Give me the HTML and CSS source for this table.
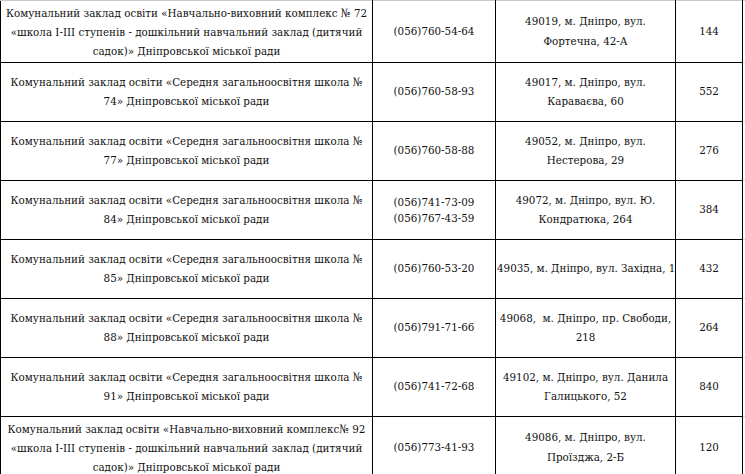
FILE: index.html
```html
<!DOCTYPE html>
<html lang="uk">
<head>
<meta charset="utf-8">
<title>Заклади освіти</title>
<link rel="stylesheet" href="styles.css">
</head>
<body>
<table class="schools">
  <colgroup>
    <col class="c-name"><col class="c-phone"><col class="c-addr"><col class="c-num"><col class="c-ghost">
  </colgroup>
  <tbody>
    <tr class="first">
      <td class="name tight">Комунальний заклад освіти «Навчально-виховний комплекс № 72<br>«школа І-ІІІ ступенів - дошкільний навчальний заклад (дитячий<br>садок)» Дніпровської міської ради</td>
      <td>(056)760-54-64</td>
      <td>49019, м. Дніпро, вул.<br>Фортечна, 42-А</td>
      <td>144</td>
      <td class="ghost"></td>
    </tr>
    <tr>
      <td class="name">Комунальний заклад освіти «Середня загальноосвітня школа №<br>74» Дніпровської міської ради</td>
      <td>(056)760-58-93</td>
      <td>49017, м. Дніпро, вул.<br>Караваєва, 60</td>
      <td>552</td>
      <td class="ghost"></td>
    </tr>
    <tr>
      <td class="name">Комунальний заклад освіти «Середня загальноосвітня школа №<br>77» Дніпровської міської ради</td>
      <td>(056)760-58-88</td>
      <td>49052, м. Дніпро, вул.<br>Нестерова, 29</td>
      <td>276</td>
      <td class="ghost"></td>
    </tr>
    <tr>
      <td class="name">Комунальний заклад освіти «Середня загальноосвітня школа №<br>84» Дніпровської міської ради</td>
      <td class="phones">(056)741-73-09<br>(056)767-43-59</td>
      <td>49072, м. Дніпро, вул. Ю.<br>Кондратюка, 264</td>
      <td>384</td>
      <td class="ghost"></td>
    </tr>
    <tr>
      <td class="name">Комунальний заклад освіти «Середня загальноосвітня школа №<br>85» Дніпровської міської ради</td>
      <td>(056)760-53-20</td>
      <td>49035, м. Дніпро, вул. Західна, 1</td>
      <td>432</td>
      <td class="ghost"></td>
    </tr>
    <tr>
      <td class="name">Комунальний заклад освіти «Середня загальноосвітня школа №<br>88» Дніпровської міської ради</td>
      <td>(056)791-71-66</td>
      <td>49068,&nbsp; м. Дніпро, пр. Свободи,<br>218</td>
      <td>264</td>
      <td class="ghost"></td>
    </tr>
    <tr>
      <td class="name">Комунальний заклад освіти «Середня загальноосвітня школа №<br>91» Дніпровської міської ради</td>
      <td>(056)741-72-68</td>
      <td>49102, м. Дніпро, вул. Данила<br>Галицького, 52</td>
      <td>840</td>
      <td class="ghost"></td>
    </tr>
    <tr class="last">
      <td class="name tight">Комунальний заклад освіти «Навчально-виховний комплекс№ 92<br>«школа І-ІІІ ступенів - дошкільний навчальний заклад (дитячий<br>садок)» Дніпровської міської ради</td>
      <td>(056)773-41-93</td>
      <td>49086, м. Дніпро, вул.<br>Проїзджа, 2-Б</td>
      <td>120</td>
      <td class="ghost"></td>
    </tr>
  </tbody>
</table>
</body>
</html>
```

FILE: styles.css
```css
html, body {
  margin: 0;
  padding: 0;
  background: #ffffff;
  overflow: hidden;
}

.schools {
  border-collapse: collapse;
  table-layout: fixed;
  width: 745px;
  font-family: "DejaVu Serif Condensed", "DejaVu Serif", serif;
  font-size: 11.5px;
  line-height: 19.4px;
  color: #111111;
  border-top: 1px solid #c8c8c8;
}

.c-name { width: 372px; }
.c-phone { width: 123px; }
.c-addr { width: 180px; }
.c-num { width: 67px; }
.c-ghost { width: 3px; }

.schools td {
  border: 1px solid #000;
  height: 58px;
  padding: 0 1px;
  text-align: center;
  vertical-align: middle;
  white-space: nowrap;
  overflow: hidden;
}

.schools tr.first td {
  border-top: 1px solid #c8c8c8;
}

.schools td.tight {
  vertical-align: top;
  padding-top: 3px;
  line-height: 19px;
}

.schools tr.last td {
  border-bottom: none;
}

.schools td.phones {
  line-height: 16px;
}

.schools td.ghost {
  border-left: none;
  border-right: none;
  border-top: 1px solid #d6d6d6;
  border-bottom: 1px solid #d6d6d6;
  padding: 0;
}
```
